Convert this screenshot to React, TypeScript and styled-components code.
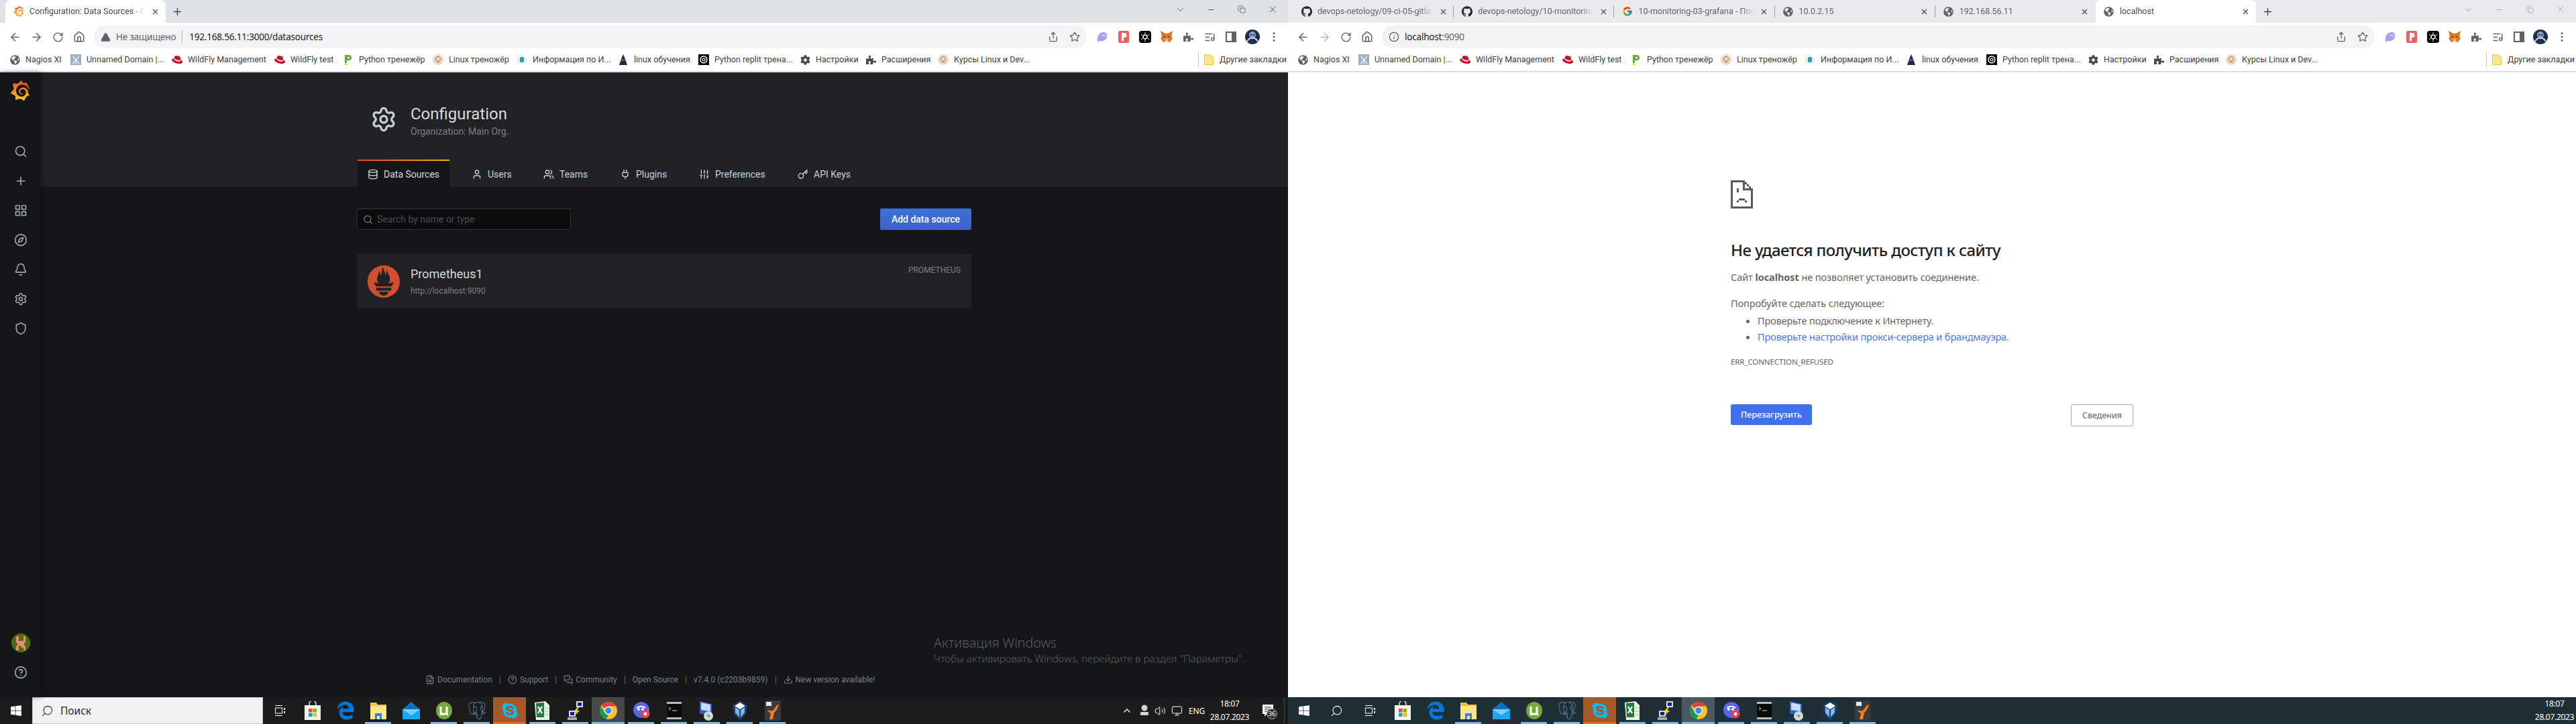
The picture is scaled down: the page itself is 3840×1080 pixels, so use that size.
import React from "react";
import styled, { createGlobalStyle } from "styled-components";
import {
  Search, Plus, LayoutGrid, Compass, Bell, Settings, Shield, Database, User, Users, Plug, SlidersVertical,
  Key, FileText, CircleHelp, MessagesSquare, Download, ArrowLeft, ArrowRight, RotateCw, House, Share, Star,
  ListMusic, Info, X, ChevronDown, ChevronUp, Minus, Copy, EllipsisVertical, Volume2, Monitor, TriangleAlert,
} from "lucide-react";
import { FaGlobeAmericas, FaRedhat, FaCog, FaPuzzlePiece, FaEdgeLegacy, FaSkype, FaWindows } from "react-icons/fa";
import { SiGrafana, SiPrometheus, SiGithub, SiPostgresql } from "react-icons/si";
import { FcGoogle } from "react-icons/fc";

const Global = createGlobalStyle`
  html, body { margin: 0; padding: 0; width: 3840px; height: 1080px; overflow: hidden; background: #fff; }
  * { box-sizing: border-box; }
`;

const Desktop = styled.div`display: flex; width: 3840px; height: 1080px; font-family: "Noto Sans", sans-serif;`;
const Win = styled.div`display: flex; flex-direction: column; width: 1920px; height: 1080px;`;

/* ---------- Browser chrome ---------- */
const TabStrip = styled.div<{ $focused: boolean }>`
  display: flex; align-items: stretch; height: 34px; flex: none;
  padding-left: 8px;
  background: ${(p) => (p.$focused ? "#dee1e6" : "#e8eaed")};
`;
const Tab = styled.div<{ $active?: boolean; $sep?: boolean }>`
  position: relative; display: flex; align-items: center; gap: 8px; width: 239.2px; padding: 0 8px 0 12px; flex: none;
  background: ${(p) => (p.$active ? "#fff" : "transparent")};
  border-radius: 8px 8px 0 0;
  &::after {
    content: ""; position: absolute; right: 0; top: 8px; bottom: 8px; width: 1px;
    background: ${(p) => (p.$sep ? "#9aa0a6" : "transparent")};
  }
`;
const TabIcon = styled.span`display: flex; width: 16px; height: 16px; flex: none; align-items: center; justify-content: center;`;
const TabTitle = styled.span<{ $active?: boolean }>`
  flex: 1; min-width: 0; overflow: hidden; white-space: nowrap; font-family: Roboto, sans-serif; font-size: 12.5px; line-height: 16px;
  color: ${(p) => (p.$active ? "#45494e" : "#5f6368")};
  -webkit-mask-image: linear-gradient(90deg, #000 90%, transparent);
  mask-image: linear-gradient(90deg, #000 90%, transparent);
`;
const TabClose = styled.span`display: flex; width: 16px; justify-content: center; color: #45494e;`;
const NewTab = styled.span`display: flex; align-items: center; width: 28px; margin-left: 9px; color: #45494e;`;
const StripSpacer = styled.div`flex: 1;`;
const Caption = styled.span<{ $focused: boolean }>`
  display: flex; align-items: center; justify-content: center; width: 46px; margin-bottom: 6px;
  color: ${(p) => (p.$focused ? "#303236" : "#8f9397")};
`;
const Toolbar = styled.div`display: flex; align-items: center; height: 38px; flex: none; background: #fff; padding: 4px 5px 0 6px;`;
const NavBtn = styled.span<{ $dim?: boolean }>`
  display: flex; align-items: center; justify-content: center; width: 32px; height: 32px; flex: none;
  color: ${(p) => (p.$dim ? "#b4b7bb" : "#5f6368")};
`;
const Omnibox = styled.div`
  display: flex; align-items: center; flex: 1; height: 34px; margin: 0 7px 0 6px; padding: 0 2px 0 10px; border-radius: 17px; background: #f1f3f4;
  font-size: 13.5px; letter-spacing: -0.2px; color: #202124;
`;
const Insecure = styled.span`color: #5f6368; display: flex; align-items: center; gap: 8px; margin-right: 9px;`;
const OmniSep = styled.span`width: 1px; height: 20px; background: #b8bbbf; margin-right: 10px;`;
const OmniIcon = styled.span`display: flex; width: 16px; margin-right: 8px; color: #5f6368;`;
const OmniPort = styled.span`color: #5f6368;`;
const OmniSpacer = styled.span`flex: 1;`;
const OmniAction = styled.span`display: flex; justify-content: center; width: 32px; color: #5f6368;`;
const Bookmarks = styled.div`
  display: flex; align-items: center; height: 36px; flex: none; padding: 0 11px 0 14px; gap: 16px; background: #fff; border-bottom: 2px solid #dcdde0;
`;
const Bookmark = styled.span`display: flex; align-items: center; gap: 8px; flex: none;`;
const BookmarkIcon = styled.span`display: flex; width: 16px; height: 16px; align-items: center; justify-content: center; flex: none;`;
const BookmarkLabel = styled.span<{ $w: number }>`
  width: ${(p) => p.$w}px; white-space: nowrap; font-family: Roboto, sans-serif; font-size: 12.5px; line-height: 16px; color: #3c4043;
`;
const OtherBookmarks = styled.span`
  display: flex; align-items: center; gap: 9px; margin-left: auto; padding-left: 8px; height: 24px; border-left: 1px solid #c8cacd;
`;

/* ---------- Grafana ---------- */
const Grafana = styled.div`display: flex; flex: 1; min-height: 0; background: #141619; font-family: Roboto, sans-serif;`;
const Sidebar = styled.nav`
  display: flex; flex-direction: column; align-items: center; width: 60px; flex: none; padding: 12px 0 15px 2px; background: #141619;
  box-shadow: 2px 0 8px rgba(0,0,0,.35); z-index: 1; color: #9fa7b3;
`;
const SideSlot = styled.span`display: flex; align-items: center; justify-content: center; height: 44px; width: 44px;`;
const SideLogo = styled.span`display: flex; height: 30px; margin-bottom: 54px; margin-right: 2px;`;
const SideBottom = styled.div`margin-top: auto; display: flex; flex-direction: column; align-items: center;`;
const GradientDefs = styled.svg`position: absolute; width: 0; height: 0;`;
const GrafMain = styled.main`position: relative; display: flex; flex-direction: column; flex: 1; min-width: 0;`;
const GrafHeader = styled.header`height: 171px; flex: none; background: #202226; padding: 50px 0 0 472px; display: flex; flex-direction: column;`;
const Heading = styled.div`display: flex; gap: 20px; align-items: center; height: 40px; padding-left: 20px; color: #c7d0d9;`;
const HeadText = styled.div`display: flex; flex-direction: column; gap: 4px; padding-top: 5px;`;
const H1 = styled.h1`margin: 0; font-size: 24px; line-height: 26px; font-weight: 400; color: #d8d9da;`;
const SubTitle = styled.div`font-size: 14px; line-height: 18px; color: #7b8087;`;
const GrafTabs = styled.div`display: flex; gap: 18px; margin: 40px 0 0 1px; height: 41px;`;
const GrafTab = styled.div<{ $active?: boolean }>`
  position: relative; display: flex; align-items: center; gap: 8px; padding: 2px 15px 0; color: ${(p) => (p.$active ? "#d8d9da" : "#c7d0d9")};
  background: ${(p) => (p.$active ? "#141619" : "transparent")};
  &::before {
    content: ""; position: absolute; left: 0; right: 0; top: 0; height: 2px;
    background: ${(p) => (p.$active ? "linear-gradient(90deg,#e3492b,#eb7b18 50%,#f2b705)" : "transparent")};
  }
`;
const GrafTabLabel = styled.span<{ $w: number }>`width: ${(p) => p.$w}px; white-space: nowrap; font-size: 14px;`;
const Page = styled.div`flex: 1; display: flex; flex-direction: column; padding: 32px 472px 0 472px;`;
const Actions = styled.div`display: flex; justify-content: space-between; height: 32px;`;
const SearchBox = styled.div`
  display: flex; align-items: center; gap: 6px; width: 319px; height: 32px; padding: 0 8px; background: #0b0c0e; border: 1px solid #2c3235; border-radius: 2px;
  font-size: 14px; color: #464c54;
`;
const AddButton = styled.div`
  display: flex; align-items: center; justify-content: center; width: 136px; height: 32px; border-radius: 2px;
  background: linear-gradient(180deg, #3d71d9, #3c62c4); color: #fff; font-size: 14px; font-weight: 500;
`;
const Card = styled.div`
  display: flex; gap: 16px; align-items: center; height: 81px; margin-top: 36px; padding: 0 16px; background: #202226; border-radius: 2px; position: relative;
`;
const CardText = styled.div`display: flex; flex-direction: column; gap: 5px; flex: 1;`;
const CardName = styled.div`font-size: 18px; line-height: 24px; color: #d8d9da;`;
const CardUrl = styled.div`font-size: 12px; line-height: 16px; color: #7b8087;`;
const CardType = styled.div`align-self: flex-start; margin-top: 16px; font-size: 12px; line-height: 16px; color: #7b8087;`;
const Footer = styled.footer`
  display: flex; align-items: center; height: 26px; margin-bottom: 13px; padding-left: 574px; font-size: 12px; color: #7b8087;
`;
const FootItem = styled.span`display: flex; align-items: center; gap: 4px; white-space: nowrap;`;
const FootSep = styled.span<{ $warm?: boolean }>`
  width: 1px; height: 12px; margin: 0 11px; background: ${(p) => (p.$warm ? "#7a5a34" : "#5a5d62")};
`;
const Activation = styled.div`
  position: absolute; left: 1332px; top: 837px; font-family: "Noto Sans", sans-serif; color: #5c5e62; white-space: nowrap; pointer-events: none;
`;
const ActivationTitle = styled.div`font-size: 19.6px; line-height: 28px; font-weight: 300;`;
const ActivationText = styled.div`font-size: 15.2px; line-height: 18px; font-weight: 300;`;

/* ---------- Error page ---------- */
const ErrorPage = styled.div`flex: 1; min-height: 0; background: #fff; padding: 161px 0 0 660px; font-family: "Noto Sans", sans-serif;`;
const ErrorBox = styled.div`display: flex; flex-direction: column; width: 600px; color: #646464;`;
const ErrorTitle = styled.h1`margin: 46px 0 0; font-size: 24px; line-height: 32px; font-weight: 500; color: #202124; letter-spacing: -0.6px;`;
const ErrorLine = styled.p<{ $top: number }>`margin: ${(p) => p.$top}px 0 0; font-size: 14.5px; line-height: 20px; letter-spacing: -0.08px;`;
const ErrorList = styled.ul`margin: 4px 0 0; padding: 0 0 0 40px; font-size: 14.5px; letter-spacing: -0.14px;`;
const ErrorItem = styled.li`line-height: 24px;`;
const ErrorLink = styled.span`color: #4a78ea;`;
const ErrorCode = styled.div`margin-top: 18px; font-size: 11.5px; line-height: 16px; letter-spacing: -0.1px;`;
const ErrorButtons = styled.div`display: flex; justify-content: space-between; align-items: flex-start; margin-top: 55px;`;
const Reload = styled.div`
  display: flex; align-items: center; justify-content: center; width: 121px; height: 31px; border-radius: 3px; background: #4070ed; color: #fff; font-size: 12.5px; font-weight: 500;
`;
const Details = styled.div`
  display: flex; align-items: center; justify-content: center; width: 93px; height: 33px; border-radius: 3px; border: 1px solid #a6a8ab; color: #5f6368; font-size: 12.5px;
`;

/* ---------- Taskbar ---------- */
const Taskbar = styled.div<{ $teal?: boolean }>`
  display: flex; align-items: center; height: 40px; flex: none; color: #fff; background: ${(p) => (p.$teal ? "#1f2f36" : "#1c1c1d")};
`;
const StartBtn = styled.span`display: flex; align-items: center; justify-content: center; width: 48px; height: 40px; flex: none;`;
const SearchField = styled.div`
  display: flex; align-items: center; gap: 10px; width: 344px; height: 40px; padding-left: 12px; background: #f2f2f2; border: 1px solid #c9c9c9; color: #2a2a2a; font-size: 15.5px; flex: none;
`;
const Lens = styled(Search)`transform: scaleX(-1);`;
const Slot = styled.span<{ $state?: "run" | "alert" | "focus" }>`
  position: relative; display: flex; align-items: center; justify-content: center; width: 49px; height: 40px; flex: none;
  background: ${(p) => (p.$state === "alert" ? "#a35a28" : p.$state === "focus" ? "rgba(255,255,255,.2)" : "transparent")};
  &::after {
    content: ""; position: absolute; bottom: 0; height: 3px;
    left: ${(p) => (p.$state === "run" ? "5px" : "0")}; right: ${(p) => (p.$state === "run" ? "5px" : "0")};
    background: ${(p) => (p.$state === "alert" ? "#f7630c" : p.$state ? "#76b9ed" : "transparent")};
  }
`;
const Tray = styled.div`display: flex; align-items: center; margin-left: auto; height: 40px;`;
const TrayIcon = styled.span`display: flex; align-items: center; justify-content: center; width: 25px;`;
const TrayLang = styled.span`width: 34px; text-align: center; font-size: 12px; letter-spacing: -0.2px;`;
const Clock = styled.div`display: flex; flex-direction: column; align-items: center; width: 64px; font-size: 12px; line-height: 20px; letter-spacing: -0.3px;`;
const Notify = styled.span`position: relative; display: flex; justify-content: center; width: 50px;`;
const NotifyBadge = styled.span`
  position: absolute; left: 23px; top: 6px; width: 16px; height: 16px; border-radius: 50%; border: 1px solid #aaa; background: #333; font-size: 9.5px; line-height: 14px; text-align: center;
`;
const ShowDesktop = styled.span`width: 6px; height: 40px; border-left: 1px solid #4a4a4a; margin-left: -1px;`;
const ClockRight = styled(Clock)`margin-right: 1px; width: 62px;`;

/* ---------- Drawn icons ---------- */
const Globe = () => <FaGlobeAmericas size={15} color="#5f6368" />;
const UnnamedIcon = () => (
  <svg width="16" height="16" viewBox="0 0 16 16"><rect width="16" height="16" fill="#9db0bd" /><path d="M8 8 3 2M8 8l5-5M8 8v7M3 14l5-6 5 6" stroke="#eef" strokeWidth="1.4" fill="none" /></svg>
);
const RedHat = () => <FaRedhat size={16} color="#c8102e" />;
const PIcon = () => (
  <svg width="16" height="16" viewBox="0 0 16 16"><path d="M3 1h6a3.5 3.5 0 0 1 0 8H6v4H3z" fill="#6aa842" /><circle cx="8.5" cy="5" r="1.5" fill="#fff" /><rect x="3" y="13.5" width="4" height="2.5" fill="#f4e10d" /></svg>
);
const TanIcon = () => (
  <svg width="16" height="16" viewBox="0 0 16 16"><circle cx="8" cy="8" r="8" fill="#f2d9c0" /><circle cx="8" cy="7" r="3.6" fill="none" stroke="#8a7a68" strokeWidth="1" /><path d="M6 13c1-2 3-2 4 0" stroke="#8a7a68" fill="none" /></svg>
);
const TealIcon = () => (
  <svg width="16" height="16" viewBox="0 0 16 16"><circle cx="8" cy="8" r="7.5" fill="#e4f3f2" /><rect x="5" y="4" width="6" height="8" rx="2" fill="#2e9c9a" /></svg>
);
const LinuxTri = () => (
  <svg width="16" height="16" viewBox="0 0 16 16"><path d="M8 0 11 7H5z" fill="#1b2c5b" /><path d="M5 7h6l1 3H4z" fill="#c2262e" /><path d="M4 10h8l2 6H2z" fill="#1b2c5b" /></svg>
);
const ReplitIcon = () => (
  <svg width="16" height="16" viewBox="0 0 16 16"><rect width="16" height="16" fill="#000" /><circle cx="8" cy="8" r="5" fill="none" stroke="#fff" strokeWidth="1.4" /><circle cx="8" cy="8" r="2" fill="none" stroke="#fff" strokeWidth="1.2" /></svg>
);
const FolderMark = () => (
  <svg width="14" height="16" viewBox="0 0 14 16"><path d="M.5.5h9l4 4v11H.5z" fill="#fde68a" stroke="#e9c83a" /></svg>
);
const Ghost = () => (
  <svg width="18" height="18" viewBox="0 0 18 18"><path d="M2 16c-1-8 3-14 9-14 4 0 6 3 5 7-1 5-6 7-10 6l-4 1z" fill="#ab9ff2" /><circle cx="10" cy="7" r="1" fill="#fff" /><circle cx="13" cy="7" r="1" fill="#fff" /></svg>
);
const Pocket = () => (
  <svg width="16" height="18" viewBox="0 0 16 18"><rect width="16" height="18" rx="2.5" fill="#f05d63" /><path d="M5 3h4a3 3 0 0 1 0 7H8v5H5z" fill="#fff" /></svg>
);
const HexExt = () => (
  <svg width="18" height="18" viewBox="0 0 18 18"><rect width="18" height="18" rx="4" fill="#000" /><circle cx="9" cy="9" r="3" fill="none" stroke="#fff" strokeWidth="1.5" /><path d="M9 2v3M9 13v3M3 5l2 2M13 11l2 2M3 13l2-2M13 7l2-2" stroke="#fff" /></svg>
);
const Fox = () => (
  <svg width="18" height="18" viewBox="0 0 18 18"><path d="M0 0l7 4h4l7-4-2 8 2 3-4 6-3-1H7l-3 1-4-6 2-3z" fill="#e2761b" /><path d="M6 10l3 3 3-3-1 6H7z" fill="#d7c1b3" /><circle cx="6" cy="9" r="1" fill="#233447" /><circle cx="12" cy="9" r="1" fill="#233447" /></svg>
);
const Panel = () => (
  <svg width="16" height="16" viewBox="0 0 16 16"><rect x="1" y="1" width="14" height="14" fill="none" stroke="#5f6368" strokeWidth="2" /><rect x="9" y="1" width="6" height="14" fill="#5f6368" /></svg>
);
const ProfilePic = () => (
  <svg width="22" height="22" viewBox="0 0 22 22"><circle cx="11" cy="11" r="11" fill="#1f2f4f" /><circle cx="11" cy="8" r="5" fill="#8da3c4" /><path d="M3 18c3-7 13-7 16 0" stroke="#c8d6ea" strokeWidth="2" fill="none" /><circle cx="9" cy="8" r="1.2" fill="#1f2f4f" /><circle cx="13" cy="8" r="1.2" fill="#1f2f4f" /></svg>
);
const SadPage = () => (
  <svg width="33" height="42" viewBox="0 0 11 14" shapeRendering="crispEdges" fill="#5a5a5a">
    <path d="M0 0h7v1H1v12h9V4h1v10H0zM6 1h1v3h3v1H6zM7 1h1v1H7zM8 2h1v1H8zM9 3h1v1H9z" />
    <rect x="3" y="4" width="1" height="2" /><rect x="3" y="10" width="1" height="1" /><rect x="4" y="9" width="3" height="1" /><rect x="7" y="10" width="1" height="1" />
  </svg>
);
const Avatar = () => (
  <svg width="28" height="28" viewBox="0 0 8 8" shapeRendering="crispEdges">
    <circle cx="4" cy="4" r="4" fill="#4f6b0c" />
    <path d="M2 1h1v2h2V1h1v3h-.5v1H6v2H5V6H3v1H2V5h.5V4H2z" fill="#e88a76" />
    <rect x="3" y="5" width="1" height="1" fill="#4f6b0c" />
  </svg>
);
const WinLogo = ({ size = 18 }: { size?: number }) => <FaWindows size={size} color="#fff" />;
const TaskView = () => (
  <svg width="18" height="18" viewBox="0 0 18 18" fill="none" stroke="#fff"><path d="M2 1.5h11M2 16.5h11" /><rect x="2.5" y="5" width="10" height="8" /><path d="M15 5h2v3h-2zM15 10h2v3h-2z" fill="#fff" stroke="none" /></svg>
);
const StoreIcon = () => (
  <svg width="24" height="28" viewBox="0 0 24 28"><path d="M7 7V4a5 5 0 0 1 10 0v3" fill="none" stroke="#ddd" strokeWidth="1.6" /><rect y="6" width="24" height="22" fill="#f4f4f4" /><rect x="6" y="11" width="5.5" height="5.5" fill="#f25022" /><rect x="12.5" y="11" width="5.5" height="5.5" fill="#7fba00" /><rect x="6" y="17.5" width="5.5" height="5.5" fill="#00a4ef" /><rect x="12.5" y="17.5" width="5.5" height="5.5" fill="#ffb900" /></svg>
);
const FolderIcon = () => (
  <svg width="24" height="26" viewBox="0 0 24 26"><path d="M0 1h9l2 3h13v22H0z" fill="#f0c33c" /><rect y="6" width="24" height="20" fill="#fde68a" /><path d="M7 26v-9h10v9h-3v-5h-4v5z" fill="#2f86d3" /></svg>
);
const MailIcon = () => (
  <svg width="26" height="26" viewBox="0 0 26 26"><path d="M13 0 26 11v15H0V11z" fill="#0b6fc4" /><path d="M0 11h26v15H0z" fill="#1ea7f0" /><path d="M0 11l13 9 13-9" fill="#7ad0fa" /></svg>
);
const TorrentIcon = () => (
  <svg width="26" height="28" viewBox="0 0 26 28"><ellipse cx="13" cy="14" rx="12" ry="13" fill="#76a83c" /><path d="M8 8v13M8 17c0 3 9 3 9 0V8M17 17c0 2 1 3 2 3" fill="none" stroke="#fff" strokeWidth="3" /></svg>
);
const ExcelIcon = () => (
  <svg width="24" height="28" viewBox="0 0 24 28"><path d="M0 2l16-2 6 6v22H2z" fill="#e8f3e0" /><path d="M2 3l12-1v22H3z" fill="#1f7a3d" /><path d="M5 8l6 10M11 8l-6 10" stroke="#fff" strokeWidth="2.4" /><path d="M15 10h6M15 15h6M15 20h6" stroke="#9cc3a3" /></svg>
);
const PuttyIcon = () => (
  <svg width="24" height="28" viewBox="0 0 24 28"><rect x="13" y="0" width="10" height="9" fill="#ddd" /><rect x="15" y="2" width="6" height="5" fill="#101ea8" /><rect x="2" y="14" width="10" height="9" fill="#ddd" /><rect x="4" y="16" width="6" height="5" fill="#101ea8" /><rect x="0" y="24" width="14" height="4" fill="#aaa" /><path d="M15 9l-6 7h4l-3 6 8-8h-4l3-5z" fill="#f8e71c" /></svg>
);
const ChromeIcon = () => (
  <svg width="26" height="26" viewBox="0 0 24 24"><circle cx="12" cy="12" r="12" fill="#fbc02d" /><path d="M12 0a12 12 0 0 1 10.4 6H12a6 6 0 0 0-5.2 3L2.6 5A12 12 0 0 1 12 0z" fill="#db4437" /><path d="M1.6 6 6.8 15A6 6 0 0 0 12 18l-3 5.7A12 12 0 0 1 1.6 6z" fill="#0f9d58" /><circle cx="12" cy="12" r="5.6" fill="#fff" /><circle cx="12" cy="12" r="4.4" fill="#4285f4" /></svg>
);
const DiscordApp = () => (
  <svg width="26" height="26" viewBox="0 0 26 26"><circle cx="13" cy="12" r="12" fill="#5865f2" /><circle cx="19" cy="18" r="6.5" fill="#ed4245" /><circle cx="19" cy="18" r="2.4" fill="#fff" /><circle cx="9" cy="11" r="2" fill="#fff" /><circle cx="15" cy="11" r="2" fill="#fff" /><path d="M6 9c4-3 10-3 13 0" stroke="#fff" strokeWidth="2" fill="none" /></svg>
);
const TerminalIcon = () => (
  <svg width="22" height="26" viewBox="0 0 22 26"><rect width="22" height="26" fill="#bbb" /><rect y="3" width="22" height="20" fill="#0a0a0a" /><path d="M3 8l3 2-3 2M8 13h7" stroke="#ddd" fill="none" /></svg>
);
const RemoteIcon = () => (
  <svg width="24" height="30" viewBox="0 0 24 30"><path d="M1 1l18 4v15L1 20z" fill="#2c5fd5" /><path d="M3 3l14 3v10L3 14z" fill="#c7ddff" /><circle cx="14" cy="23" r="7" fill="#d6d6d6" /><path d="M11 23l3-3v2h3l-3 4v-3z" fill="#33a853" /></svg>
);
const VBoxIcon = () => (
  <svg width="24" height="30" viewBox="0 0 24 30"><path d="M12 0l11 7-2 13-9 10-9-10L1 7z" fill="#1d3d6e" /><path d="M12 3l8 5-8 5-8-5z" fill="#fff" /><path d="M5 10l6 4v11L5 18zM19 10l-6 4v11l6-7z" fill="#7db7e8" /></svg>
);
const XamppIcon = () => (
  <svg width="24" height="30" viewBox="0 0 24 30"><rect width="24" height="30" rx="2" fill="#3a3a3a" /><path d="M21 6c-5 1-6 7-9 9-3 1-6 0-8-1 1 3 3 4 5 5l-2 9h5l2-10c4-3 5-7 7-12z" fill="#fb7a24" /><rect x="2" y="2" width="8" height="6" fill="#e8e8e8" /></svg>
);
const UsbTray = () => (
  <svg width="16" height="18" viewBox="0 0 16 18"><circle cx="9" cy="5" r="4.5" fill="#cfd3d6" /><rect x="3" y="11" width="12" height="5" rx="1" fill="#cfd3d6" /></svg>
);
const NoteTray = () => (
  <svg width="18" height="18" viewBox="0 0 18 18"><path d="M1 0h16v14H7l-3 4v-4H1z" fill="#fff" /><path d="M4 4h10M4 7h10M4 10h10" stroke="#222" /></svg>
);

/* ---------- Data ---------- */
const marks: [React.ReactNode, string, number][] = [
  [<Globe />, "Nagios XI", 51],
  [<UnnamedIcon />, "Unnamed Domain |...", 111],
  [<RedHat />, "WildFly Management", 113],
  [<RedHat />, "WildFly test", 62],
  [<PIcon />, "Python тренежёр", 94],
  [<TanIcon />, "Linux треножёр", 85],
  [<TealIcon />, "Информация по И...", 111],
  [<LinuxTri />, "linux обучения", 80],
  [<ReplitIcon />, "Python replit трена...", 111],
  [<FaCog size={15} color="#45494e" />, "Настройки", 58],
  [<FaPuzzlePiece size={15} color="#45494e" />, "Расширения", 68],
  [<TanIcon />, "Курсы Linux и Dev...", 108],
];

type TabData = { icon: React.ReactNode; title: string; sep?: boolean; active?: boolean };
const leftTabs: TabData[] = [{ icon: <SiGrafana size={16} fill="url(#grafanaFlame)" />, title: "Configuration: Data Sources - Grafana", active: true }];
const rightTabs: TabData[] = [
  { icon: <SiGithub size={16} color="#24292f" />, title: "devops-netology/09-ci-05-gitlab", sep: true },
  { icon: <SiGithub size={16} color="#24292f" />, title: "devops-netology/10-monitoring-03", sep: true },
  { icon: <FcGoogle size={16} />, title: "10-monitoring-03-grafana - Поиск", sep: true },
  { icon: <Globe />, title: "10.0.2.15", sep: true },
  { icon: <Globe />, title: "192.168.56.11" },
  { icon: <Globe />, title: "localhost", active: true },
];

type TaskApp = { node: React.ReactNode; state?: "run" | "alert" | "focus" };
const apps: TaskApp[] = [
  { node: <StoreIcon /> },
  { node: <FaEdgeLegacy size={28} color="#0078d7" /> },
  { node: <FolderIcon />, state: "run" },
  { node: <MailIcon /> },
  { node: <TorrentIcon />, state: "run" },
  { node: <SiPostgresql size={26} color="#5f88ad" />, state: "run" },
  { node: <FaSkype size={26} color="#19b5f1" />, state: "alert" },
  { node: <ExcelIcon />, state: "run" },
  { node: <PuttyIcon />, state: "run" },
  { node: <ChromeIcon />, state: "focus" },
  { node: <DiscordApp />, state: "run" },
  { node: <TerminalIcon />, state: "run" },
  { node: <RemoteIcon />, state: "run" },
  { node: <VBoxIcon />, state: "run" },
  { node: <XamppIcon />, state: "run" },
];

const gTabs: [React.ReactNode, string, number][] = [
  [<Database size={16} />, "Data Sources", 83],
  [<User size={16} />, "Users", 35],
  [<Users size={16} />, "Teams", 42],
  [<Plug size={16} />, "Plugins", 46],
  [<SlidersVertical size={16} />, "Preferences", 75],
  [<Key size={16} />, "API Keys", 55],
];

/* ---------- Shared chrome ---------- */
const Chrome = ({ focused, tabs, omni }: { focused: boolean; tabs: TabData[]; omni: React.ReactNode }) => (
  <>
    <TabStrip $focused={focused}>
      {tabs.map((t) => (
        <Tab key={t.title} $active={t.active} $sep={t.sep}>
          <TabIcon>{t.icon}</TabIcon>
          <TabTitle $active={t.active}>{t.title}</TabTitle>
          <TabClose><X size={13} /></TabClose>
        </Tab>
      ))}
      <NewTab><Plus size={17} /></NewTab>
      <StripSpacer />
      <Caption $focused={focused}><ChevronDown size={15} strokeWidth={1.2} /></Caption>
      <Caption $focused={focused}><Minus size={13} strokeWidth={1.4} /></Caption>
      <Caption $focused={focused}><Copy size={12} strokeWidth={1.2} /></Caption>
      <Caption $focused={focused}><X size={16} strokeWidth={1.1} /></Caption>
    </TabStrip>
    <Toolbar>
      <NavBtn><ArrowLeft size={19} /></NavBtn>
      <NavBtn $dim={!focused}><ArrowRight size={19} /></NavBtn>
      <NavBtn><RotateCw size={17} /></NavBtn>
      <NavBtn><House size={18} /></NavBtn>
      <Omnibox>
        {omni}
        <OmniSpacer />
        <OmniAction><Share size={16} /></OmniAction>
        <OmniAction><Star size={16} /></OmniAction>
      </Omnibox>
      <NavBtn><Ghost /></NavBtn>
      <NavBtn><Pocket /></NavBtn>
      <NavBtn><HexExt /></NavBtn>
      <NavBtn><Fox /></NavBtn>
      <NavBtn><FaPuzzlePiece size={15} /></NavBtn>
      <NavBtn><ListMusic size={17} /></NavBtn>
      <NavBtn><Panel /></NavBtn>
      <NavBtn><ProfilePic /></NavBtn>
      <NavBtn><EllipsisVertical size={18} /></NavBtn>
    </Toolbar>
    <Bookmarks>
      {marks.map(([icon, label, w], i) => (
        <Bookmark key={i}><BookmarkIcon>{icon}</BookmarkIcon><BookmarkLabel $w={w}>{label}</BookmarkLabel></Bookmark>
      ))}
      <OtherBookmarks><FolderMark /><BookmarkLabel $w={91}>Другие закладки</BookmarkLabel></OtherBookmarks>
    </Bookmarks>
  </>
);

export default function App() {
  return (
    <Desktop>
      <Global />
      <GradientDefs aria-hidden="true">
        <defs>
          <linearGradient id="grafanaFlame" x1="0" y1="0" x2="0" y2="1">
            <stop offset="0" stopColor="#e8502a" />
            <stop offset="1" stopColor="#fbca0a" />
          </linearGradient>
        </defs>
      </GradientDefs>
      <Win>
        <Chrome
          focused
          tabs={leftTabs}
          omni={
            <>
              <Insecure><TriangleAlert size={15} fill="#5f6368" color="#5f6368" />Не защищено</Insecure>
              <OmniSep />
              <span>192.168.56.11:3000/datasources</span>
            </>
          }
        />
        <Grafana>
          <Sidebar>
            <SideLogo><SiGrafana size={30} fill="url(#grafanaFlame)" /></SideLogo>
            <SideSlot><Search size={20} /></SideSlot>
            <SideSlot><Plus size={20} /></SideSlot>
            <SideSlot><LayoutGrid size={20} /></SideSlot>
            <SideSlot><Compass size={20} /></SideSlot>
            <SideSlot><Bell size={20} /></SideSlot>
            <SideSlot><Settings size={20} /></SideSlot>
            <SideSlot><Shield size={20} /></SideSlot>
            <SideBottom>
              <SideSlot><Avatar /></SideSlot>
              <SideSlot><CircleHelp size={20} /></SideSlot>
            </SideBottom>
          </Sidebar>
          <GrafMain>
            <GrafHeader>
              <Heading>
                <Settings size={40} strokeWidth={2} />
                <HeadText>
                  <H1>Configuration</H1>
                  <SubTitle>Organization: Main Org.</SubTitle>
                </HeadText>
              </Heading>
              <GrafTabs>
                {gTabs.map(([icon, label, w], i) => (
                  <GrafTab key={label} $active={i === 0}>{icon}<GrafTabLabel $w={w}>{label}</GrafTabLabel></GrafTab>
                ))}
              </GrafTabs>
            </GrafHeader>
            <Page>
              <Actions>
                <SearchBox><Search size={15} color="#7b8087" />Search by name or type</SearchBox>
                <AddButton>Add data source</AddButton>
              </Actions>
              <Card>
                <SiPrometheus size={48} color="#d14f30" />
                <CardText>
                  <CardName>Prometheus1</CardName>
                  <CardUrl>http://localhost:9090</CardUrl>
                </CardText>
                <CardType>PROMETHEUS</CardType>
              </Card>
            </Page>
            <Footer>
              <FootItem><FileText size={14} />Documentation</FootItem>
              <FootSep />
              <FootItem><CircleHelp size={14} />Support</FootItem>
              <FootSep />
              <FootItem><MessagesSquare size={14} />Community</FootItem>
              <FootSep />
              <FootItem>Open Source</FootItem>
              <FootSep $warm />
              <FootItem>v7.4.0 (c2203b9859)</FootItem>
              <FootSep />
              <FootItem><Download size={14} />New version available!</FootItem>
            </Footer>
            <Activation>
              <ActivationTitle>Активация Windows</ActivationTitle>
              <ActivationText>Чтобы активировать Windows, перейдите в раздел "Параметры".</ActivationText>
            </Activation>
          </GrafMain>
        </Grafana>
        <Taskbar>
          <StartBtn><WinLogo /></StartBtn>
          <SearchField><Lens size={19} strokeWidth={1.3} />Поиск</SearchField>
          <Slot><TaskView /></Slot>
          {apps.map((a, i) => <Slot key={i} $state={a.state}>{a.node}</Slot>)}
          <Tray>
            <TrayIcon><ChevronUp size={16} /></TrayIcon>
            <TrayIcon><UsbTray /></TrayIcon>
            <TrayIcon><Volume2 size={17} strokeWidth={1.4} /></TrayIcon>
            <TrayIcon><Monitor size={17} strokeWidth={1.4} /></TrayIcon>
            <TrayLang>ENG</TrayLang>
            <Clock><span>18:07</span><span>28.07.2023</span></Clock>
            <Notify><NoteTray /><NotifyBadge>36</NotifyBadge></Notify>
            <ShowDesktop />
          </Tray>
        </Taskbar>
      </Win>
      <Win>
        <Chrome
          focused={false}
          tabs={rightTabs}
          omni={
            <>
              <OmniIcon><Info size={16} /></OmniIcon>
              <span>localhost<OmniPort>:9090</OmniPort></span>
            </>
          }
        />
        <ErrorPage>
          <ErrorBox>
            <SadPage />
            <ErrorTitle>Не удается получить доступ к сайту</ErrorTitle>
            <ErrorLine $top={14}>Сайт <b>localhost</b> не позволяет установить соединение.</ErrorLine>
            <ErrorLine $top={19}>Попробуйте сделать следующее:</ErrorLine>
            <ErrorList>
              <ErrorItem>Проверьте подключение к Интернету.</ErrorItem>
              <ErrorItem><ErrorLink>Проверьте настройки прокси-сервера и брандмауэра.</ErrorLink></ErrorItem>
            </ErrorList>
            <ErrorCode>ERR_CONNECTION_REFUSED</ErrorCode>
            <ErrorButtons>
              <Reload>Перезагрузить</Reload>
              <Details>Сведения</Details>
            </ErrorButtons>
          </ErrorBox>
        </ErrorPage>
        <Taskbar $teal>
          <StartBtn><WinLogo /></StartBtn>
          <Slot><Lens size={19} strokeWidth={1.3} /></Slot>
          <Slot><TaskView /></Slot>
          {apps.map((a, i) => <Slot key={i} $state={a.state}>{a.node}</Slot>)}
          <Tray><ClockRight><span>18:07</span><span>28.07.2023</span></ClockRight></Tray>
        </Taskbar>
      </Win>
    </Desktop>
  );
}
